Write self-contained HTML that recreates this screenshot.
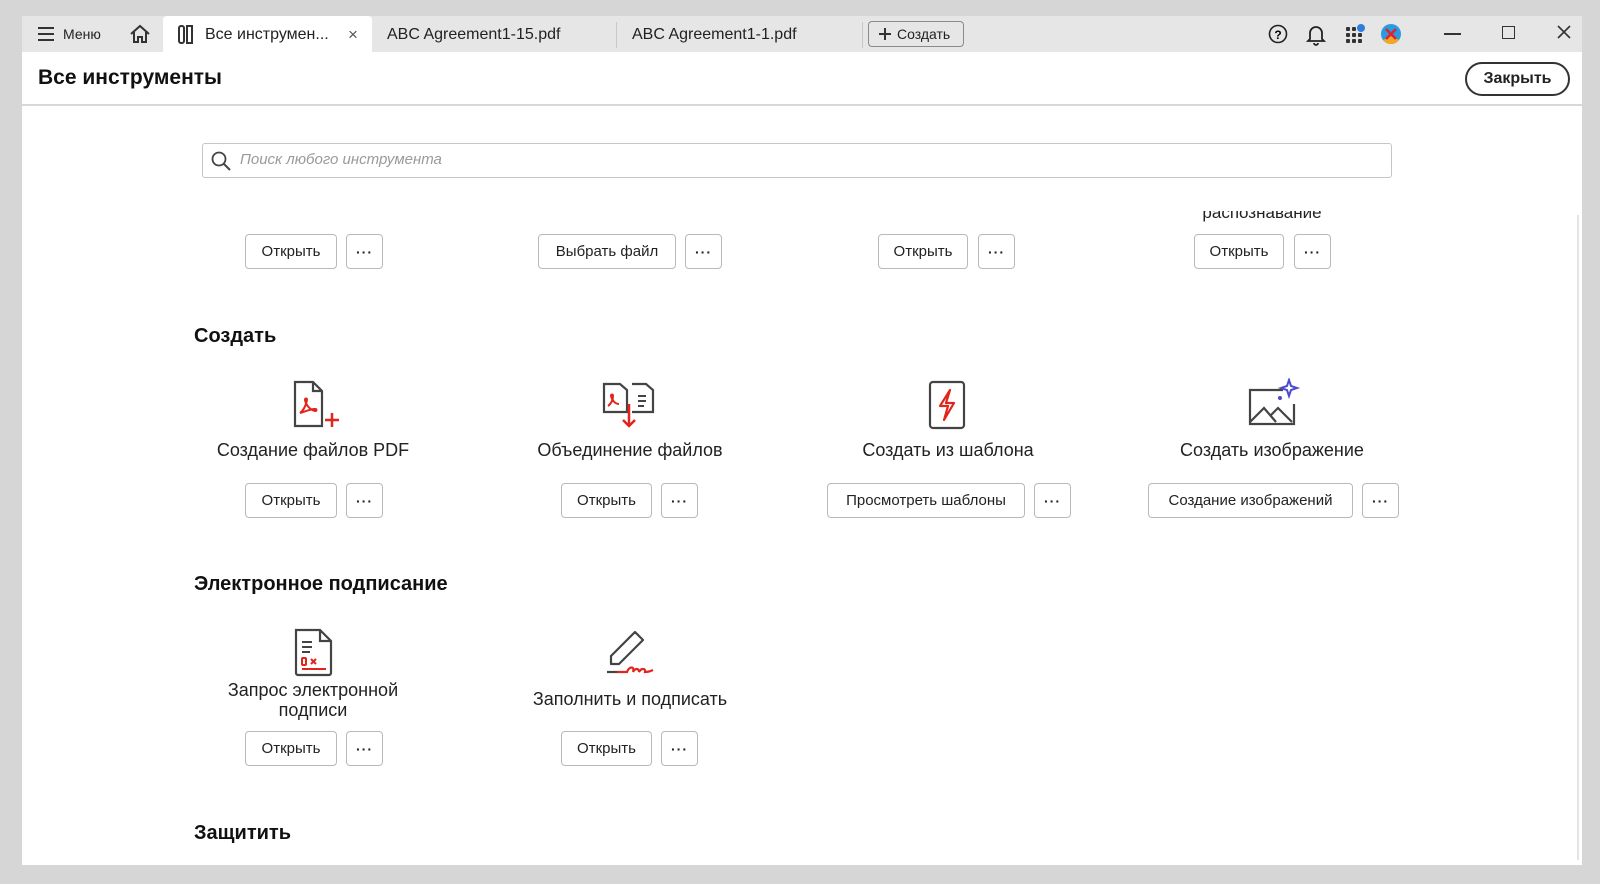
<!DOCTYPE html>
<html><head><meta charset="utf-8"><style>
*{box-sizing:border-box;margin:0;padding:0}
body{width:1600px;height:884px;background:#d6d6d6;font-family:"Liberation Sans",Arial,sans-serif;color:#222;position:relative;overflow:hidden}
.a{position:absolute}
.win{left:22px;top:16px;width:1560px;height:849px;background:#fff}
.tabbar{left:22px;top:16px;width:1560px;height:36px;background:#e6e6e6}
.t{font-size:16px;color:#222;white-space:nowrap}
.btn{position:absolute;height:35px;border:1.5px solid #b9b9b9;border-radius:4px;background:#fff;font-size:15px;display:flex;align-items:center;justify-content:center;color:#222}
.dots{width:37px;font-weight:bold;letter-spacing:1px;font-size:14px}
.h{font-size:20px;font-weight:bold;color:#111}
.lbl{font-size:18px;text-align:center;width:260px;color:#222;line-height:20px}
svg{position:absolute}
</style></head><body>
<div class="a win"></div>
<div class="a tabbar"></div>
<svg style="left:37px;top:26px" width="18" height="16"><path d="M1 2h16M1 8h16M1 14h16" stroke="#333" stroke-width="2"/></svg>
<div class="a t" style="left:63px;top:26px;font-size:14px">Меню</div>
<svg style="left:129px;top:24px" width="22" height="20"><path d="M2 10L11 2l9 8M5 8v10h4v-5h4v5h4V8" fill="none" stroke="#333" stroke-width="2"/></svg>
<div class="a" style="left:163px;top:16px;width:209px;height:36px;background:#fff;border-radius:4px 4px 0 0"></div>
<svg style="left:178px;top:25px" width="16" height="20"><rect x="1" y="1" width="5" height="17" rx="2" fill="none" stroke="#333" stroke-width="2"/><rect x="9" y="1" width="5" height="17" fill="none" stroke="#333" stroke-width="2"/></svg>
<div class="a t" style="left:205px;top:26px">Все инструмен...</div>
<div class="a t" style="left:348px;top:25px;font-size:17px;color:#555">×</div>
<div class="a t" style="left:387px;top:26px">ABC Agreement1-15.pdf</div>
<div class="a" style="left:616px;top:22px;width:1px;height:26px;background:#c8c8c8"></div>
<div class="a t" style="left:632px;top:26px">ABC Agreement1-1.pdf</div>
<div class="a" style="left:862px;top:22px;width:1px;height:26px;background:#c8c8c8"></div>
<div class="a" style="left:868px;top:21px;width:96px;height:26px;border:1.5px solid #8a8a8a;border-radius:4px;font-size:14px;padding:4px 0 0 28px">Создать</div>
<svg style="left:878px;top:27px" width="14" height="14"><path d="M7 1v12M1 7h12" stroke="#333" stroke-width="2"/></svg>
<svg style="left:1268px;top:24px" width="20" height="20"><circle cx="10" cy="10" r="8.5" fill="none" stroke="#222" stroke-width="1.6"/><text x="10" y="15" font-size="12" font-weight="bold" text-anchor="middle" font-family="Liberation Sans">?</text></svg>
<svg style="left:1306px;top:24px" width="20" height="22"><path d="M4 15V9a6 6 0 0112 0v6l2 2H2zM8 19a2 2 0 004 0" fill="none" stroke="#222" stroke-width="1.8"/></svg>
<svg style="left:1344px;top:23px" width="22" height="22"><g fill="#333"><rect x="2" y="4" width="4" height="4" rx="1"/><rect x="8" y="4" width="4" height="4" rx="1"/><rect x="2" y="10" width="4" height="4" rx="1"/><rect x="8" y="10" width="4" height="4" rx="1"/><rect x="14" y="10" width="4" height="4" rx="1"/><rect x="2" y="16" width="4" height="4" rx="1"/><rect x="8" y="16" width="4" height="4" rx="1"/><rect x="14" y="16" width="4" height="4" rx="1"/></g><circle cx="17" cy="5" r="4" fill="#2f7de1"/></svg>
<svg style="left:1380px;top:23px" width="22" height="22"><circle cx="11" cy="11" r="10" fill="#2a9be0"/><path d="M3 17a10 10 0 0016 0l-8-4z" fill="#f5a623"/><path d="M6 6l10 10M16 6L6 16" stroke="#d23" stroke-width="2.5"/></svg>
<div class="a" style="left:1444px;top:33px;width:17px;height:1.5px;background:#333"></div>
<div class="a" style="left:1502px;top:26px;width:13px;height:13px;border:1.5px solid #333"></div>
<svg style="left:1557px;top:25px" width="14" height="14"><path d="M1 1l12 12M13 1L1 13" stroke="#333" stroke-width="1.6"/></svg>
<div class="a h" style="left:38px;top:66px;font-size:21px">Все инструменты</div>
<div class="a" style="left:1465px;top:62px;width:105px;height:34px;border:2px solid #333;border-radius:17px;font-size:16px;font-weight:bold;display:flex;align-items:center;justify-content:center">Закрыть</div>
<div class="a" style="left:22px;top:104px;width:1560px;height:1.5px;background:#d8d8d8"></div>
<div class="a" style="left:1577px;top:215px;width:2px;height:645px;background:#e4e4e4"></div>
<div class="a lbl" style="left:1132px;top:211px;height:12px;overflow:hidden;line-height:10px;font-size:17px"><span style="position:relative;top:-3px">распознавание</span></div>
<div class="a" style="left:22px;top:185px;width:1550px;height:25px;background:#fff"></div>
<div class="a" style="left:202px;top:143px;width:1190px;height:35px;border:1.5px solid #c6c6c6;border-radius:3px"></div>
<svg style="left:211px;top:151px" width="20" height="20"><circle cx="8" cy="8" r="6.5" fill="none" stroke="#444" stroke-width="1.8"/><path d="M13 13l6 6" stroke="#444" stroke-width="2"/></svg>
<div class="a" style="left:240px;top:151px;font-size:15px;font-style:italic;color:#9a9a9a">Поиск любого инструмента</div>

<div class="btn" style="left:245px;top:234px;width:92px">Открыть</div><div class="btn dots" style="left:346px;top:234px">···</div>
<div class="btn" style="left:538px;top:234px;width:138px">Выбрать файл</div><div class="btn dots" style="left:685px;top:234px">···</div>
<div class="btn" style="left:878px;top:234px;width:90px">Открыть</div><div class="btn dots" style="left:978px;top:234px">···</div>
<div class="btn" style="left:1194px;top:234px;width:90px">Открыть</div><div class="btn dots" style="left:1294px;top:234px">···</div>

<div class="a h" style="left:194px;top:325px">Создать</div>
<svg style="left:292px;top:380px" width="50" height="50"><path d="M3 2h18l9 9v35H3z M21 2v9h9" fill="none" stroke="#444" stroke-width="2.2"/><path d="M8 33c4-3 6-8 7-13 0-2-2-2-2 0 1 5 5 10 10 11 2 0 2-2 0-2-5 0-11 3-15 4" fill="none" stroke="#e1251b" stroke-width="2"/><path d="M40 33v14M33 40h14" stroke="#e1251b" stroke-width="2.5"/></svg>
<svg style="left:602px;top:380px" width="58" height="50"><path d="M2 4h16l7 6v22H2z" fill="none" stroke="#444" stroke-width="2.2"/><path d="M30 4h14l7 6v22H30" fill="none" stroke="#444" stroke-width="2.2"/><path d="M36 16h8M36 21h8M36 26h6" stroke="#444" stroke-width="2"/><path d="M6 26c3-2 5-6 5-10 0-2-2-2-2 0 1 4 4 8 8 8" fill="none" stroke="#e1251b" stroke-width="2"/><path d="M27 24v22M21 40l6 6 6-6" fill="none" stroke="#e1251b" stroke-width="2.5"/></svg>
<svg style="left:928px;top:380px" width="40" height="50"><rect x="2" y="2" width="34" height="46" rx="3" fill="none" stroke="#444" stroke-width="2.2"/><path d="M22 10l-10 16h8l-4 14 10-17h-8z" fill="none" stroke="#e1251b" stroke-width="2.2" stroke-linejoin="round"/></svg>
<svg style="left:1247px;top:378px" width="56" height="50"><path d="M36 12H3v34h44V26" fill="none" stroke="#444" stroke-width="2.2"/><path d="M3 44l14-14 12 14M23 38l8-8 14 14" fill="none" stroke="#444" stroke-width="2.2"/><path d="M42 2l2 6 6 2-6 2-2 6-2-6-6-2 6-2z" fill="none" stroke="#4a4ad0" stroke-width="2"/><circle cx="33" cy="20" r="2" fill="#4a4ad0"/></svg>
<div class="a lbl" style="left:183px;top:440px">Создание файлов PDF</div>
<div class="a lbl" style="left:500px;top:440px">Объединение файлов</div>
<div class="a lbl" style="left:818px;top:440px">Создать из шаблона</div>
<div class="a lbl" style="left:1142px;top:440px">Создать изображение</div>
<div class="btn" style="left:245px;top:483px;width:92px">Открыть</div><div class="btn dots" style="left:346px;top:483px">···</div>
<div class="btn" style="left:561px;top:483px;width:91px">Открыть</div><div class="btn dots" style="left:661px;top:483px">···</div>
<div class="btn" style="left:827px;top:483px;width:198px">Просмотреть шаблоны</div><div class="btn dots" style="left:1034px;top:483px">···</div>
<div class="btn" style="left:1148px;top:483px;width:205px">Создание изображений</div><div class="btn dots" style="left:1362px;top:483px">···</div>

<div class="a h" style="left:194px;top:573px">Электронное подписание</div>
<svg style="left:293px;top:628px" width="42" height="50"><path d="M3 2h24l11 11v32a2 2 0 01-2 2H5a2 2 0 01-2-2z M27 2v11h11" fill="none" stroke="#444" stroke-width="2.2"/><path d="M9 14h10M9 19h10M9 24h8" stroke="#444" stroke-width="2"/><rect x="9" y="30" width="4" height="7" rx="1" fill="none" stroke="#e1251b" stroke-width="2"/><path d="M18 31l5 5M23 31l-5 5M9 41h24" stroke="#e1251b" stroke-width="2"/></svg>
<svg style="left:605px;top:628px" width="52" height="50"><path d="M30 4l8 8-24 24H6v-8z" fill="none" stroke="#444" stroke-width="2.2" stroke-linejoin="round"/><path d="M2 44h10" stroke="#444" stroke-width="2.2"/><path d="M12 44h10c2-6 8-6 6 0 2-4 6-4 6 0 2-4 7-4 6 0 3 0 6-1 8-2" fill="none" stroke="#e1251b" stroke-width="2.2"/></svg>
<div class="a lbl" style="left:183px;top:680px">Запрос электронной<br>подписи</div>
<div class="a lbl" style="left:500px;top:689px">Заполнить и подписать</div>
<div class="btn" style="left:245px;top:731px;width:92px">Открыть</div><div class="btn dots" style="left:346px;top:731px">···</div>
<div class="btn" style="left:561px;top:731px;width:91px">Открыть</div><div class="btn dots" style="left:661px;top:731px">···</div>

<div class="a h" style="left:194px;top:822px">Защитить</div>
</body></html>
